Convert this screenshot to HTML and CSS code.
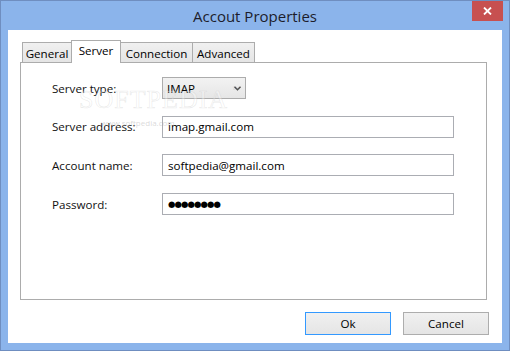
FILE: index.html
```html
<!DOCTYPE html>
<html>
<head>
<meta charset="utf-8">
<link rel="stylesheet" href="styles.css">
</head>
<body>
<div class="window">
  <div class="titlebar">
    <span class="title">Accout Properties</span>
    <div class="close">
      <svg width="9" height="8" viewBox="0 0 9 8"><path d="M1 0.5 L8 7.5 M8 0.5 L1 7.5" stroke="#fff" stroke-width="1.8"/></svg>
    </div>
  </div>
  <div class="client">
    <div class="tabs">
      <div class="tab t-general">General</div>
      <div class="tab active t-server">Server</div>
      <div class="tab t-conn">Connection</div>
      <div class="tab t-adv">Advanced</div>
    </div>
    <div class="panel">
      <div class="form">
        <label class="label">Server type:</label>
        <div class="select"><span>IMAP</span>
          <svg width="7" height="5" viewBox="0 0 7 5"><path d="M0.5 0.8 L3.5 3.8 L6.5 0.8" fill="none" stroke="#444" stroke-width="1.4"/></svg>
        </div>
        <label class="label">Server address:</label>
        <div class="field">imap.gmail.com</div>
        <label class="label">Account name:</label>
        <div class="field">softpedia@gmail.com</div>
        <label class="label">Password:</label>
        <div class="field pw">●●●●●●●●</div>
      </div>
      <div class="watermark">SOFTPEDIA<sup>™</sup></div>
      <div class="watermark-url">www.softpedia.com</div>
    </div>
    <div class="buttons">
      <button class="btn default">Ok</button>
      <button class="btn">Cancel</button>
    </div>
  </div>
</div>
</body>
</html>
```
FILE: styles.css
```css
html, body {
  margin: 0;
  padding: 0;
}
body {
  width: 510px;
  height: 351px;
  overflow: hidden;
  font-family: "Open Sans", "Noto Sans", sans-serif;
  font-size: 11.6px;
  color: #000;
}
.window {
  box-sizing: border-box;
  width: 510px;
  height: 351px;
  background: #8bb4eb;
  border: 1px solid #6f8ec0;
  display: flex;
  flex-direction: column;
  position: relative;
}
.titlebar {
  height: 29px;
  display: flex;
  align-items: center;
  justify-content: center;
}
.title {
  font-size: 15px;
  color: #1d1d2b;
  margin-top: 1px;
}
.close {
  position: absolute;
  top: 0;
  right: 6px;
  width: 31px;
  height: 20px;
  background: #c75050;
  display: flex;
  align-items: center;
  justify-content: center;
}
.client {
  flex: 1;
  margin: 0 7px 7px 7px;
  background: #fff;
  display: flex;
  flex-direction: column;
  padding: 10px 13px 0 12px;
  position: relative;
}
.tabs {
  display: flex;
  align-items: flex-end;
  height: 22px;
  padding-left: 2px;
  position: relative;
  z-index: 1;
}
.tab {
  box-sizing: border-box;
  height: 20px;
  border: 1px solid #acacac;
  border-bottom: none;
  background: linear-gradient(#f0f0f0, #e5e5e5);
  display: flex;
  align-items: center;
  justify-content: center;
  padding-top: 1px;
}
.tab + .tab { margin-left: -1px; }
.t-general { width: 50px; }
.t-server { width: 50px; }
.t-conn { width: 73px; }
.t-adv { width: 63px; }
.tab.active {
  height: 23px;
  background: #fff;
  margin-bottom: -1px;
  padding-top: 0;
  padding-bottom: 3px;
}
.panel {
  box-sizing: border-box;
  width: 467px;
  height: 238px;
  border: 1px solid #acacac;
  position: relative;
  padding: 14px 0 0 31px;
}
.form {
  display: grid;
  grid-template-columns: 110px 292px;
  grid-auto-rows: 22px;
  row-gap: 16.7px;
  align-items: center;
}
.label {
  color: #111;
}
.select {
  box-sizing: border-box;
  width: 84px;
  height: 22px;
  border: 1px solid #acacac;
  background: linear-gradient(#f2f2f2, #e6e6e6);
  display: flex;
  align-items: center;
  justify-content: space-between;
  padding: 0 4px 0 4px;
}
.field {
  box-sizing: border-box;
  height: 22px;
  border: 1px solid #abadb3;
  display: flex;
  align-items: center;
  padding-left: 5px;
}
.pw {
  font-family: "DejaVu Sans", sans-serif;
  font-size: 8.5px;
  letter-spacing: -0.9px;
}
.watermark {
  position: absolute;
  left: 58px;
  top: 22px;
  font-family: "Liberation Serif", serif;
  font-size: 26px;
  letter-spacing: 1px;
  color: rgba(255,255,255,0.35);
  -webkit-text-stroke: 0.6px rgba(180,180,180,0.3);
  pointer-events: none;
}
.watermark sup {
  font-size: 8px;
  vertical-align: top;
  -webkit-text-stroke: 0;
  color: rgba(160,160,160,0.4);
  margin-left: 4px;
}
.watermark-url {
  position: absolute;
  left: 80px;
  top: 54px;
  font-size: 8px;
  color: rgba(160,160,160,0.4);
  pointer-events: none;
}
.buttons {
  display: flex;
  justify-content: flex-end;
  gap: 12px;
  margin-top: 12px;
  margin-right: 0;
}
.btn {
  box-sizing: border-box;
  width: 86px;
  height: 23px;
  border: 1px solid #adadad;
  background: linear-gradient(#f0f0f0, #e5e5e5);
  font-family: "Open Sans", "Noto Sans", sans-serif;
  font-size: 11.6px;
  color: #000;
  padding: 0;
}
.btn.default {
  border-color: #3399ff;
}
```
